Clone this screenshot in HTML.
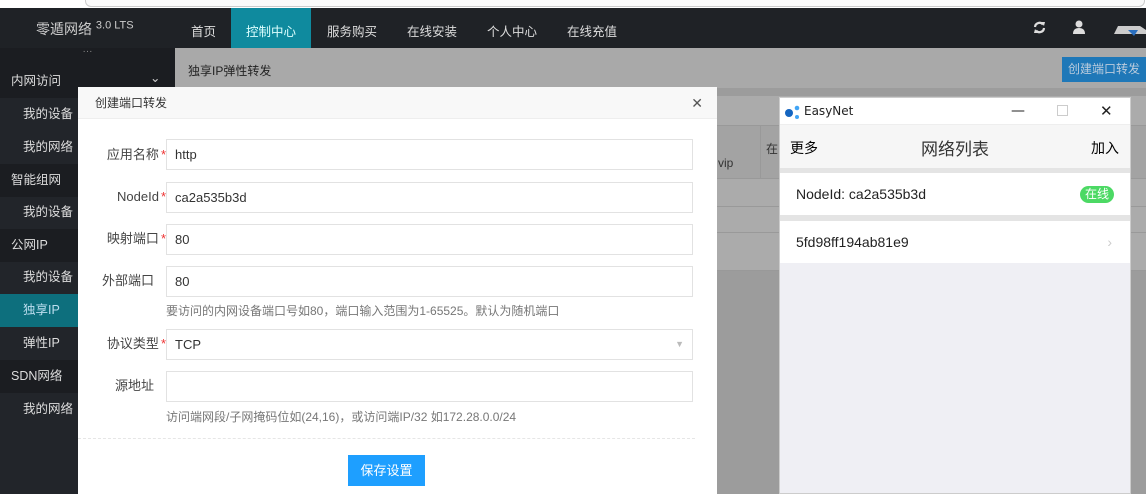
<!DOCTYPE html>
<html><head><meta charset="utf-8"><style>
*{margin:0;padding:0;box-sizing:border-box}
body{width:1146px;height:494px;overflow:hidden;position:relative;background:#9c9c9c;font-family:"Liberation Sans","Noto Sans CJK SC",sans-serif;font-size:13px}
.abs{position:absolute}
.inp{position:absolute;left:166px;width:527px;height:31px;border:1px solid #e2e2e2;background:#fff;padding-left:8px;line-height:29px;font-size:13px;color:#333}
.lab{position:absolute;left:0;width:88px;text-align:right;font-size:13px;color:#444;line-height:16px}
.lab b{color:#e33;font-weight:normal;margin-left:2px}
.help{position:absolute;font-size:12px;color:#777}
.s{position:absolute;left:0;width:175px;height:33px;line-height:33px;font-size:12.5px;color:#ddd}
</style></head><body>
<div class="abs" style="left:0;top:0;width:1146px;height:8px;background:#fff"><i style="position:absolute;left:85px;top:-6px;width:1060px;height:13px;border:1px solid #ccc;border-radius:6px;background:#fafafa"></i></div>
<div class="abs" style="left:0;top:8px;width:1146px;height:40px;background:#1f2226;color:#ddd;font-size:12.5px">
<div class="abs" style="left:231px;top:0;width:80px;height:40px;background:#0f8a9e"></div>
<span class="abs" style="left:36px;top:11px;font-size:14px;color:#ccc">零遁网络 <sup style="font-size:11px">3.0 LTS</sup></span>
<span class="abs" style="left:191px;top:13px">首页</span><span class="abs" style="left:246px;top:13px;color:#dff">控制中心</span><span class="abs" style="left:327px;top:13px">服务购买</span><span class="abs" style="left:407px;top:13px">在线安装</span><span class="abs" style="left:487px;top:13px">个人中心</span><span class="abs" style="left:567px;top:13px">在线充值</span>
<svg class="abs" style="left:1033px;top:13px" width="13" height="13" viewBox="0 0 13 13"><path d="M2 6 A4.5 4.5 0 0 1 10 3.5" stroke="#ddd" stroke-width="2.2" fill="none"/><path d="M11 7 A4.5 4.5 0 0 1 3 9.5" stroke="#ddd" stroke-width="2.2" fill="none"/><path d="M8 1 L12 1 L11 5Z M5 12 L1 12 L2 8Z" fill="#ddd"/></svg>
<svg class="abs" style="left:1073px;top:12px" width="12" height="14"><circle cx="6" cy="4" r="3.5" fill="#ddd"/><path d="M0 14 Q0 8 6 8 Q12 8 12 14Z" fill="#ddd"/></svg>
<svg class="abs" style="left:1114px;top:14px" width="32" height="14"><path d="M4 4 H26 L32 8 V12 H0 Z" fill="#ccc"/><path d="M14 8 h10 l-4 6 z" fill="#2a6fbf"/></svg>
</div>
<div class="abs" style="left:0;top:48px;width:175px;height:446px;background:#22252a"></div>
<div class="s" style="top:48px;height:17px;line-height:8px;text-align:center;font-size:10px;color:#888;background:#1b1d21">···</div>
<div class="s" style="top:65px;background:#1b1d21;padding-left:11px">内网访问<span style="position:absolute;left:150px;top:-3px;color:#ccc">⌄</span></div>
<div class="s" style="top:98px;padding-left:23px">我的设备</div>
<div class="s" style="top:131px;padding-left:23px">我的网络</div>
<div class="s" style="top:164px;background:#1b1d21;padding-left:11px">智能组网</div>
<div class="s" style="top:196px;padding-left:23px">我的设备</div>
<div class="s" style="top:229px;background:#1b1d21;padding-left:11px">公网IP</div>
<div class="s" style="top:261px;padding-left:23px">我的设备</div>
<div class="s" style="top:294px;padding-left:23px;background:#0d6f7d;color:#bde">独享IP</div>
<div class="s" style="top:327px;padding-left:23px">弹性IP</div>
<div class="s" style="top:360px;background:#1b1d21;padding-left:11px">SDN网络</div>
<div class="s" style="top:393px;padding-left:23px">我的网络</div>

<div class="abs" style="left:175px;top:48px;width:971px;height:40px;background:#a9a9a9"></div>
<div class="abs" style="left:188px;top:62px;font-size:12px;color:#222">独享IP弹性转发</div>
<div class="abs" style="left:1062px;top:57px;width:84px;height:25px;background:#1f78b8;color:#bcd;font-size:12px;line-height:25px;text-align:center">创建端口转发</div>
<div class="abs" style="left:175px;top:96px;width:971px;height:175px;background:#ababab"></div>
<div class="abs" style="left:175px;top:125px;width:971px;height:54px;background:#a3a3a3;border-top:1px solid #999;border-bottom:1px solid #999"></div>
<div class="abs" style="left:760px;top:125px;width:1px;height:54px;background:#999"></div>
<div class="abs" style="left:718px;top:156px;color:#333;font-size:12px">vip</div>
<div class="abs" style="left:766px;top:140px;color:#333;font-size:12px">在</div>
<div class="abs" style="left:175px;top:206px;width:971px;height:1px;background:#999"></div>
<div class="abs" style="left:175px;top:232px;width:971px;height:1px;background:#999"></div>
<div class="abs" style="left:175px;top:270px;width:971px;height:1px;background:#999"></div>

<div class="abs" style="left:78px;top:87px;width:639px;height:407px;background:#fff"></div>
<div class="abs" style="left:78px;top:87px;width:639px;height:32px;background:#f8f8f8;border-bottom:1px solid #eee;font-size:12px;color:#333;line-height:32px;padding-left:17px">创建端口转发<span style="position:absolute;right:14px;font-size:14px;color:#555">✕</span></div>
<div class="abs" style="left:78px;top:0;width:639px;height:494px">
<div class="lab" style="top:147px">应用名称<b>*</b></div><div class="inp" style="top:139px;left:88px">http</div>
<div class="lab" style="top:189px">NodeId<b>*</b></div><div class="inp" style="top:182px;left:88px">ca2a535b3d</div>
<div class="lab" style="top:231px">映射端口<b>*</b></div><div class="inp" style="top:224px;left:88px">80</div>
<div class="lab" style="top:273px;padding-right:12px">外部端口</div><div class="inp" style="top:266px;left:88px">80</div>
<div class="help" style="top:302px;left:88px">要访问的内网设备端口号如80，端口输入范围为1-65525。默认为随机端口</div>
<div class="lab" style="top:336px">协议类型<b>*</b></div><div class="inp" style="top:329px;left:88px">TCP<span style="position:absolute;right:8px;color:#bbb;font-size:9px">▼</span></div>
<div class="lab" style="top:378px;padding-right:12px">源地址</div><div class="inp" style="top:371px;left:88px"></div>
<div class="help" style="top:408px;left:88px">访问端网段/子网掩码位如(24,16)，或访问端IP/32 如172.28.0.0/24</div>
<div class="abs" style="left:0;top:438px;width:617px;border-top:1px dashed #e6e6e6"></div>
<div class="abs" style="left:270px;top:455px;width:77px;height:31px;background:#1e9fff;color:#fff;line-height:31px;text-align:center;font-size:13px">保存设置</div>
</div>

<div class="abs" style="left:779px;top:97px;width:352px;height:397px;background:#efeff4;border:1px solid #ccc">
<div class="abs" style="left:0;top:0;width:350px;height:26px;background:#fff;font-size:12px;color:#222;line-height:26px;padding-left:24px;font-family:'DejaVu Sans',sans-serif">EasyNet
<svg style="position:absolute;left:5px;top:7px" width="16" height="14"><circle cx="4" cy="8" r="4" fill="#1565c0"/><circle cx="12" cy="3" r="2.3" fill="#42a5f5"/><circle cx="12" cy="12" r="2" fill="#42a5f5"/></svg>
<span style="position:absolute;left:231px;font-size:14px">—</span><span style="position:absolute;left:277px;top:7px;width:11px;height:11px;border:1px solid #ccc"></span><span style="position:absolute;left:320px;font-size:15px">✕</span></div>
<div class="abs" style="left:0;top:26px;width:350px;height:44px;background:#f6f6f6;border-top:1px solid #eee">
<span class="abs" style="left:10px;top:13px;font-size:14px">更多</span><span class="abs" style="left:141px;top:10px;font-size:17px;color:#333">网络列表</span><span class="abs" style="left:311px;top:13px;font-size:14px">加入</span></div>
<div class="abs" style="left:0;top:70px;width:350px;height:5px;background:#e4e4e4"></div>
<div class="abs" style="left:0;top:75px;width:350px;height:42px;background:#fff;font-size:14px;color:#222;line-height:42px;padding-left:16px">NodeId: ca2a535b3d<span style="position:absolute;right:16px;top:13px;width:34px;height:17px;border-radius:9px;background:#4cd964;color:#fff;font-size:12px;line-height:17px;text-align:center">在线</span></div>
<div class="abs" style="left:0;top:117px;width:350px;height:6px;background:#e4e4e4"></div>
<div class="abs" style="left:0;top:123px;width:350px;height:42px;background:#fff;font-size:14px;color:#222;line-height:42px;padding-left:16px">5fd98ff194ab81e9<span style="position:absolute;right:18px;color:#ccc">›</span></div>
</div>
</body></html>
